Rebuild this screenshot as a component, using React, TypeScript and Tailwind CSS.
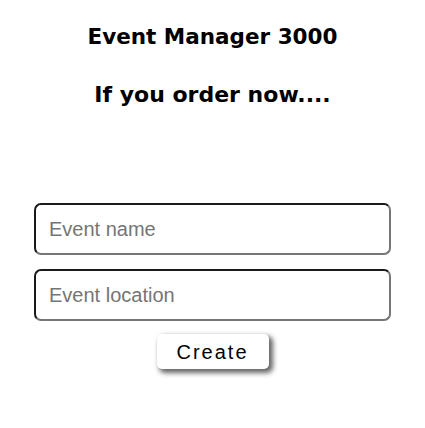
import React from "react";

export default function App() {
  return (
    <div className="w-[425px] h-[428px] bg-white flex flex-col items-center" style={{ fontFamily: "'Liberation Sans', Arial, sans-serif" }}>
      <h1 className="mt-[22px] text-[21.5px] leading-[30px] font-bold text-black" style={{ fontFamily: "'DejaVu Sans', sans-serif" }}>
        Event Manager 3000
      </h1>
      <h2 className="mt-[28px] text-[22px] leading-[30px] font-bold text-black" style={{ fontFamily: "'DejaVu Sans', sans-serif" }}>
        If you order now....
      </h2>
      <form className="mt-[93px] flex flex-col items-center gap-[14px] w-[357px]">
        <input
          placeholder="Event name"
          className="w-full h-[52px] rounded-[7px] border-2 border-t-[#1a1a1a] border-l-[#1a1a1a] border-r-[#767676] border-b-[#767676] px-[13px] text-[20px] placeholder:text-[#757575] outline-none"
        />
        <input
          placeholder="Event location"
          className="w-full h-[52px] rounded-[7px] border-2 border-t-[#1a1a1a] border-l-[#1a1a1a] border-r-[#767676] border-b-[#767676] px-[13px] text-[20px] placeholder:text-[#757575] outline-none"
        />
      </form>
      <button className="mt-[13px] w-[112px] h-[35px] rounded-[5px] bg-white text-[20px] tracking-[2px] text-black shadow-[3px_3px_5px_1px_rgba(0,0,0,0.6)]">
        Create
      </button>
    </div>
  );
}
